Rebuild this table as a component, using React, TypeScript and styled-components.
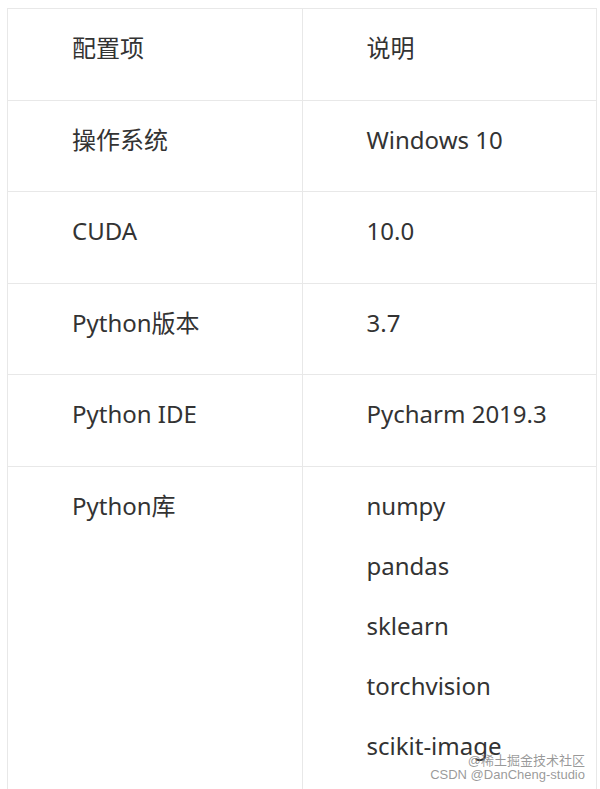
import React from "react";
import styled, { createGlobalStyle } from "styled-components";

const rows: { name: string; values: string[] }[] = [
  { name: "操作系统", values: ["Windows 10"] },
  { name: "CUDA", values: ["10.0"] },
  { name: "Python版本", values: ["3.7"] },
  { name: "Python IDE", values: ["Pycharm 2019.3"] },
  { name: "Python库", values: ["numpy", "pandas", "sklearn", "torchvision", "scikit-image"] },
];

const App = () => {
  return (
    <Page>
      <GlobalStyle />
      <Table>
        <thead>
          <tr>
            <Cell as="th">配置项</Cell>
            <Cell as="th">说明</Cell>
          </tr>
        </thead>
        <tbody>
          {rows.map((row) => (
            <tr key={row.name}>
              <Cell>{row.name}</Cell>
              <Cell>
                <ValueList>
                  {row.values.map((v) => (
                    <Value key={v}>{v}</Value>
                  ))}
                </ValueList>
              </Cell>
            </tr>
          ))}
        </tbody>
      </Table>
      <Watermark>
        <WatermarkLine>@稀土掘金技术社区</WatermarkLine>
        <WatermarkLine>CSDN @DanCheng-studio</WatermarkLine>
      </Watermark>
    </Page>
  );
};

export default App;

const GlobalStyle = createGlobalStyle`
html, body {
  margin: 0;
  padding: 0;
  background: #FFFFFF;
  overflow: hidden;
}
`;

const Page = styled.div`
position: relative;
width: 600px;
height: 789px;
overflow: hidden;
padding: 8px 3px 0 7px;
box-sizing: border-box;
font-family: "Noto Sans", "Noto Sans CJK SC", sans-serif;
`;

const Table = styled.table`
width: 590px;
border-collapse: collapse;
table-layout: fixed;
`;

const Cell = styled.td`
border: 1px solid #E8E8E8;
padding: 20px 20px 32.5px 64px;
text-align: left;
vertical-align: top;

color: #333333;
font-size: 24px;
font-weight: 400;
line-height: 38px;
`;

const ValueList = styled.div`
display: flex;
flex-direction: column;
gap: 22px;
`;

const Value = styled.span``;

const Watermark = styled.div`
position: absolute;
right: 15px;
top: 754px;
display: flex;
flex-direction: column;
align-items: flex-end;

color: rgba(120, 120, 120, 0.75);
font-family: "Liberation Sans", "Noto Sans CJK SC", sans-serif;
font-size: 13px;
line-height: 14px;
`;

const WatermarkLine = styled.span``;
